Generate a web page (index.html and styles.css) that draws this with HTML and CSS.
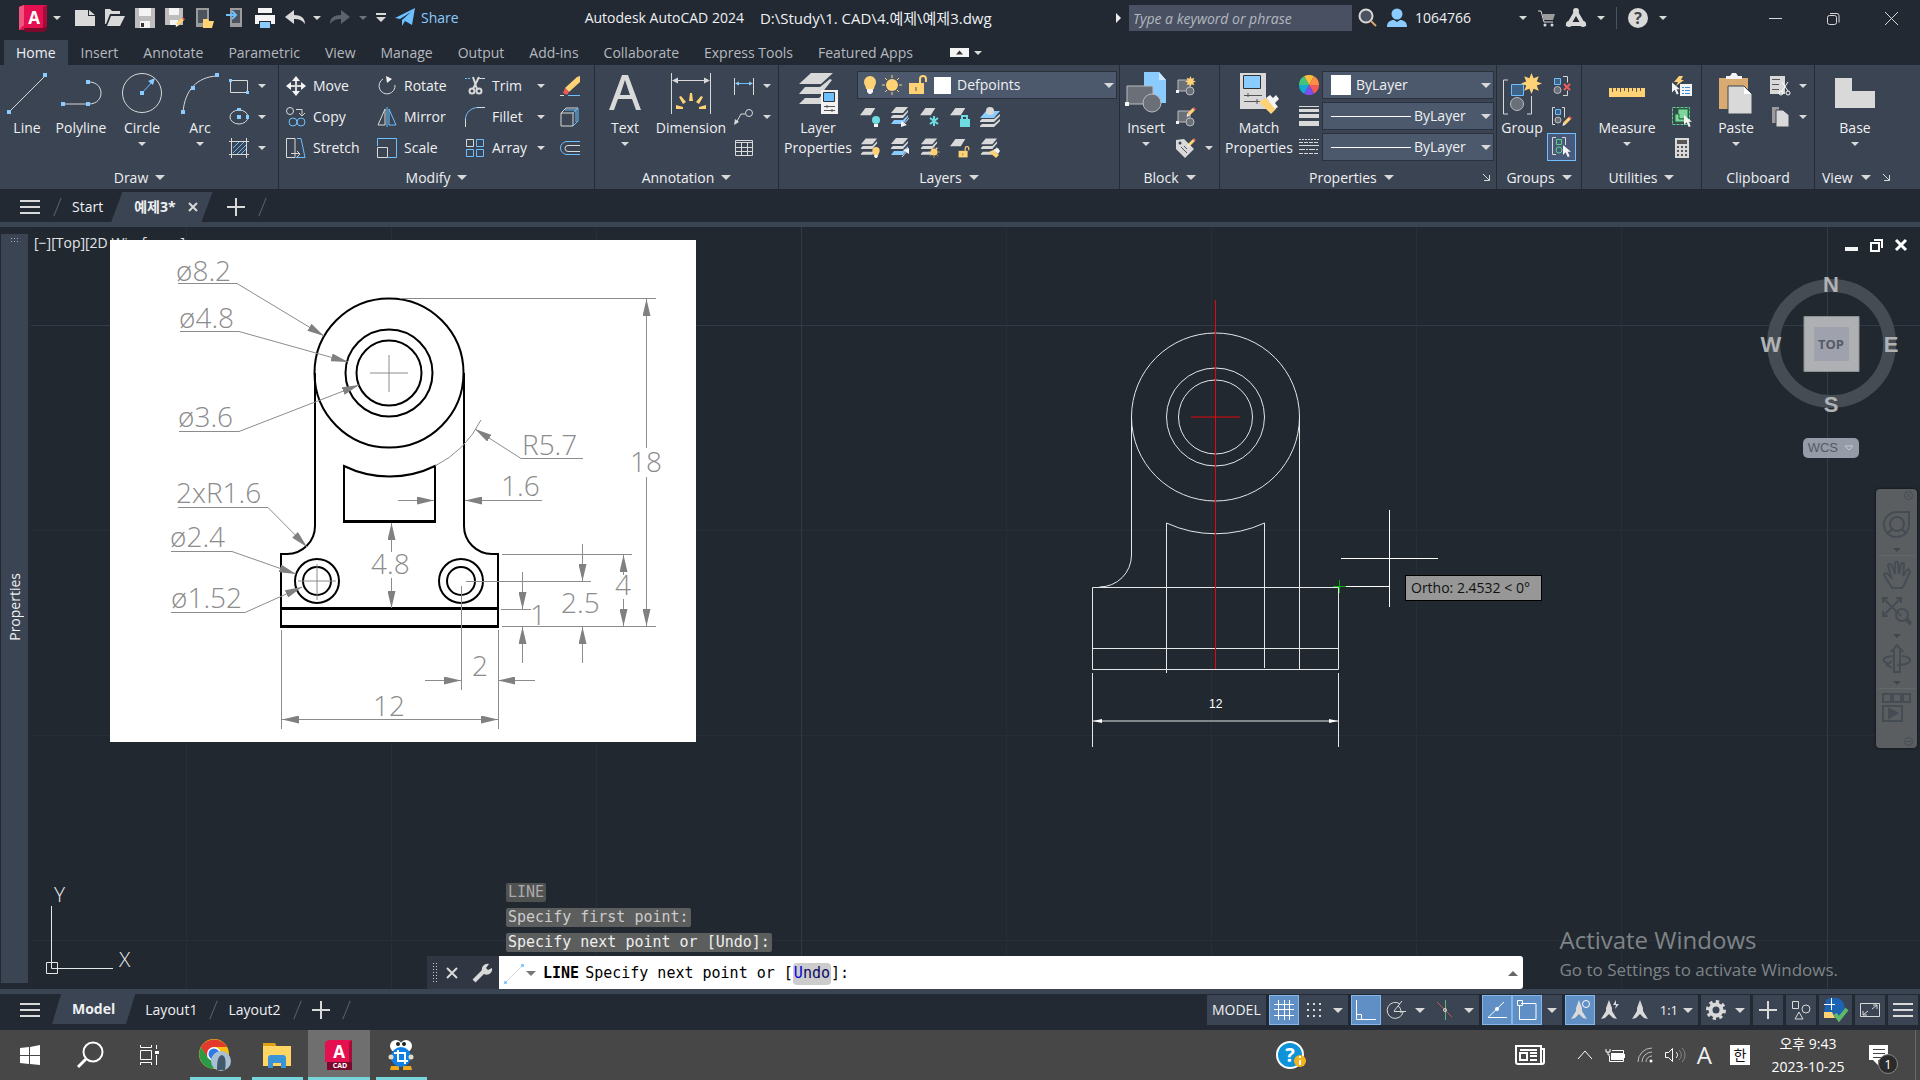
FILE: index.html
```
<!DOCTYPE html>
<html lang="ko">
<head>
    <meta charset="UTF-8">
    <meta name="viewport" content="width=device-width, initial-scale=1.0">
    <title>Autodesk AutoCAD 2024</title>
    <link rel="stylesheet" href="styles.css">
</head>
<body>
    <!-- shared icon parts -->
    <svg class="defs" aria-hidden="true">
        <symbol id="sheet" viewBox="0 0 20 20"><path class="fw" d="M6 0h11l-5 8H0z"/></symbol>
        <symbol id="stack" viewBox="0 0 20 20"><path class="fw" d="M6 0h12l-5 6H1z M1 10l2-2h10l5-5v2l-5 6H1z M1 16l2-2h10l5-5v2l-5 6H1z"/></symbol>
        <symbol id="stackb" viewBox="0 0 20 20"><path class="fw" d="M6 0h12l-5 6H1z M1 10l2-2h10l5-5v2l-5 6H1z"/><path class="fb" d="M1 17l3-4h9l5-5v2l-5 7z"/></symbol>
        <symbol id="bulb" viewBox="0 0 12 18"><path class="fy" d="M6 0a6 6 0 0 1 6 6c0 3-2 4-2 7H2c0-3-2-4-2-7a6 6 0 0 1 6-6z"/><path class="fwh" d="M3 13h6v3l-2 2H5l-2-2z"/></symbol>
        <symbol id="sun" viewBox="0 0 20 20"><circle class="fy" cx="10" cy="10" r="6"/><path class="y" d="M10 0v3M10 17v3M0 10h3M17 10h3M3 3l2 2M15 15l2 2M17 3l-2 2M5 15l-2 2"/></symbol>
        <symbol id="unlock" viewBox="0 0 20 20"><path class="y2" d="M12 8V4a3 3 0 0 1 6 0v3"/><path class="fy" d="M1 8h15v11H1z"/><path class="dk" d="M8 12v4"/></symbol>
        <symbol id="pencil" viewBox="0 0 20 20"><path class="fy" d="M14 2l4 4L8 16l-4-4z"/><path class="fr" d="M14 2l2-2 4 4-2 2z"/><path class="fwh" d="M4 12l4 4-5 2z"/></symbol>
        <symbol id="burst" viewBox="0 0 20 20"><path class="fy" d="M10 0l2 5 5-2-2 5 5 2-5 2 2 5-5-2-2 5-2-5-5 2 2-5-5-2 5-2-2-5 5 2z"/></symbol>
        <symbol id="cursor" viewBox="0 0 12 18"><path class="fwh" d="M0 0v15l4-4 3 7 3-1-3-7h5z"/></symbol>
        <symbol id="blockpart" viewBox="0 0 20 20"><path class="gr" d="M2 4h12v11H2z"/><circle class="gr" cx="14" cy="15" r="4"/><path class="fwh" d="M0 14h3v3H0z"/></symbol>
        <symbol id="compass" viewBox="0 0 20 20"><path class="fw" d="M10 0l3 8v3l5 8-4-1-4-4-4 4-4 1 5-8V8z"/></symbol>
    </svg>

    <header class="titlebar">
        <button class="logo" aria-label="Application menu">
            <svg width="30" height="27" viewBox="0 0 30 27"><path fill="#e51050" d="M0 2l5-2h23v22l-5 3H0z"/><path fill="#7a0a2c" d="M5 23h18l5-3v4l-3 3H6z"/><path fill="#a60d3b" d="M24 2l4-2v21l-4 2z"/><path fill="#f0557f" d="M0 2l5-2v20l-5 5z"/><text class="logo-a" x="15" y="19">A</text></svg>
            <span class="caret"></span>
        </button>
        <nav class="quick">
            <button aria-label="New"><svg width="20" height="20"><path class="fw" d="M0 2h13v6h7v10H0z M14 2l6 5h-6z"/></svg></button>
            <button aria-label="Open"><svg width="20" height="20"><path class="fw" d="M0 1h5l2 2h8v3H5L1 16H0z M6 8h14l-5 10H2z"/></svg></button>
            <button aria-label="Save"><svg width="20" height="20"><path fill="#bdbdbd" d="M0 0h20v20H0z"/><path class="fwh" d="M4 0h12v8H4z M5 13h10v7H5z"/><path fill="#333" d="M6 15h3v4H6z"/></svg></button>
            <button aria-label="Save as"><svg width="20" height="20"><path fill="#bdbdbd" d="M0 0h18v17H0z"/><path class="fwh" d="M4 0h10v7H4z M5 12h8v5H5z"/><use href="#pencil" x="9" y="9" width="11" height="11"/></svg></button>
            <button aria-label="Open from mobile"><svg width="20" height="20"><path fill="#9b9b9b" d="M1 0h13v19H1z"/><path fill="#4d535c" d="M3 2h9v13H3z"/><path class="fy" d="M8 11h5l1 2h5l-2 7H8z"/></svg></button>
            <button aria-label="Save to mobile"><svg width="20" height="20"><path fill="#9b9b9b" d="M5 0h12v19H5z"/><path fill="#4d535c" d="M7 2h8v13H7z"/><path class="b2" d="M1 7h9M7 3l4 4-4 4"/></svg></button>
            <button aria-label="Plot"><svg width="20" height="20"><path class="fwh" d="M3 0h14v5H3z M0 7h20v9h-4v-3H4v3H0z"/><path class="fb" d="M5 14h10v6H5z"/></svg></button>
            <button aria-label="Undo"><svg width="20" height="20"><path class="fw" d="M0 9l9-7v5c7 0 11 3 11 9-3-4-6-5-11-5v5z"/></svg></button>
        </nav>
        <nav class="quick2">
            <span class="caret"></span>
            <button aria-label="Redo"><svg width="20" height="20"><path fill="#5c636e" d="M20 9l-9-7v5C4 7 0 10 0 16c3-4 6-5 11-5v5z"/></svg></button>
            <span class="caret dim"></span>
            <button aria-label="Customize"><svg width="10" height="10"><path class="fw" d="M0 0h10v2H0z M0 4h10l-5 5z"/></svg></button>
            <button class="share"><svg width="20" height="20"><path fill="#6cc0ff" d="M0 10L20 0l-3 17-7-4-3 5v-6l9-8-11 7z"/></svg>Share</button>
        </nav>
        <h1 class="app-title"><span>Autodesk AutoCAD 2024</span><span class="file-name">D:\Study\1. CAD\4.예제\예제3.dwg</span></h1>
        <div class="search">
            <span class="caret-right"></span>
            <input type="text" aria-label="Search" placeholder="Type a keyword or phrase">
            <button aria-label="Find"><svg width="20" height="20"><circle class="w2" cx="8" cy="8" r="6.5" fill="#4b5361"/><path stroke="#d8a46a" stroke-width="2" d="M13 13l5 5"/></svg></button>
        </div>
        <button class="user"><svg width="20" height="20"><circle class="fb" cx="10" cy="6" r="5.5"/><path class="fb" d="M0 19c0-5 3-7 7-7l3 2 3-2c4 0 7 2 7 7z"/></svg>1064766</button>
        <div class="account">
            <span class="caret"></span>
            <button aria-label="Store"><svg width="17" height="18"><path class="w1" d="M0 2h3l3 11h9"/><path fill="#9b9b9b" d="M4 5h13l-2 6H6z"/><circle class="fw" cx="7" cy="16" r="1.5"/><circle class="fw" cx="14" cy="16" r="1.5"/></svg></button>
            <button aria-label="Apps"><svg width="20" height="20"><path class="w3" d="M10 4L3 16h14z"/><circle class="fw" cx="10" cy="3" r="3"/><circle class="fw" cx="3" cy="16" r="3"/><circle class="fw" cx="17" cy="16" r="3"/></svg></button>
            <span class="caret"></span>
            <span class="vline"></span>
            <button class="help" aria-label="Help">?</button>
            <span class="caret"></span>
        </div>
        <div class="window-buttons">
            <button aria-label="Minimize"><svg width="13" height="13"><path class="w1" d="M0 6.500h13"/></svg></button>
            <button aria-label="Restore"><svg width="13" height="13"><rect class="w1" x=".5" y="3.500" width="9" height="9" rx="2"/><path class="w1" d="M3 1.500h7q2 0 2 2v7"/></svg></button>
            <button aria-label="Close"><svg width="13" height="13"><path class="w1" d="M0 0l13 13M13 0L0 13"/></svg></button>
        </div>
    </header>

    <nav class="tabs">
        <button class="on">Home</button>
        <button>Insert</button>
        <button>Annotate</button>
        <button>Parametric</button>
        <button>View</button>
        <button>Manage</button>
        <button>Output</button>
        <button>Add-ins</button>
        <button>Collaborate</button>
        <button>Express Tools</button>
        <button>Featured Apps</button>
        <button class="collapse" aria-label="Collapse ribbon"><svg width="19" height="9"><path class="fwh" d="M0 0h19v9H0z"/><path fill="#333" d="M6 6.500h7l-3.500-4z"/></svg><span class="caret"></span></button>
    </nav>

    <section class="ribbon">
        <div class="panel p-draw">
            <div class="tools">
                <button class="big w52"><svg width="40" height="44"><path class="w1" d="M2 40L38 4"/><path class="fb" d="M0 38h4v4H0z M36 1h4v4h-4z"/></svg>Line</button>
                <button class="big w56"><svg width="40" height="44"><path class="w1" d="M2 32h26c16 0 16-22 0-22"/><path class="fb" d="M0 30h4v4H0z M25 30h4v4h-4z M25 8h4v4h-4z"/></svg>Polyline</button>
                <button class="big w66"><svg width="42" height="44"><circle class="w1" cx="21" cy="21" r="19.500"/><path class="b1" d="M21 21L32 9"/><path class="fb" d="M19 19h4v4h-4z M34 6l-2 7-5-4z"/></svg>Circle<span class="caret"></span></button>
                <button class="big w50"><svg width="38" height="44"><path class="w1" d="M2 40C4 18 16 5 36 4"/><path class="fb" d="M0 38h4v4H0z M34 1h4v4h-4z M10 14h4v4h-4z"/></svg>Arc<span class="caret"></span></button>
                <div class="rows">
                    <button class="small" aria-label="Rectangle"><svg width="20" height="20"><path class="w1" d="M1.500 4.500h17v12h-17z"/><path class="fb" d="M0 3h3v3H0z M17 15h3v3h-3z"/></svg><span class="caret"></span></button>
                    <button class="small" aria-label="Ellipse"><svg width="20" height="20"><ellipse class="w1" cx="10" cy="10" rx="9" ry="7"/><path class="fb" d="M8 8h4v4H8z M8 1h4v3H8z M17 8h3v4h-3z"/></svg><span class="caret"></span></button>
                    <button class="small" aria-label="Hatch"><svg width="20" height="20"><path class="w1" d="M0 3.500h20M0 16.500h20M2.500 0v20M17.500 0v20"/><path class="b1" d="M4 10l6-6M4 15L15 4M8 16l9-9M12 16l5-5"/></svg><span class="caret"></span></button>
                </div>
            </div>
            <button class="panel-title">Draw<span class="caret wide"></span></button>
        </div>

        <div class="panel p-modify">
            <div class="tools modify-grid">
                <button class="small"><svg width="20" height="20"><path class="w2" d="M10 2v16M2 10h16"/><path class="fwh" d="M10 0l4 5H6z M10 20l4-5H6z M0 10l5-4v8z M20 10l-5-4v8z"/></svg>Move</button>
                <button class="small"><svg width="20" height="20"><path class="w1" d="M6 3a8 8 0 1 0 12 6"/><path class="fwh" d="M9 0l6 3-5 4z"/></svg>Rotate</button>
                <button class="small sp"><svg width="20" height="20"><path class="w2" d="M8 1l4 12M14 1L8 13"/><circle class="w2" cx="7" cy="15" r="2.500"/><circle class="w2" cx="14" cy="15" r="2.500"/><path class="b1" d="M0 2.500h6" stroke-dasharray="2 1"/><path class="w1" d="M14 2.500h6"/></svg>Trim<span class="caret"></span></button>
                <button class="small" aria-label="Erase"><svg width="20" height="20"><path class="fy" d="M20 0v6L9 16l-4-4L17 1z"/><path class="fr" d="M5 12l4 4-2 3-4-2z"/><path class="w1" d="M0 19.500h4"/><path class="b1" d="M8 19.500h12"/></svg></button>
                <button class="small"><svg width="20" height="20"><circle class="w1" cx="4" cy="4" r="3.500"/><path class="w1" d="M10 2.500h6v5M13 6l3 3 3-3"/><circle class="b1" cx="7" cy="15" r="4"/><circle class="b1" cx="15" cy="15" r="4"/></svg>Copy</button>
                <button class="small"><svg width="20" height="20"><path class="w1" d="M8 2v16H1z"/><path class="b1" d="M12 2v16h7z M10 0v20"/></svg>Mirror</button>
                <button class="small sp"><svg width="20" height="20"><path class="b1" d="M.5 12C.5 6 6 .5 13 .5"/><path class="w1" d="M12 .5h8M.5 12v8"/></svg>Fillet<span class="caret"></span></button>
                <button class="small" aria-label="Explode"><svg width="20" height="20"><path class="w1" d="M1 6h12v13H1z M1 6l5-5h12M13 6l3-3"/><path class="b1" d="M13 6l5-5v13l-5 5M5 3h11v12"/></svg></button>
                <button class="small"><svg width="20" height="20"><path class="w1" d="M9 .5H.5v19H9z M5 15.500h8M11 13l3 3-3 3"/><path class="b1" d="M11 .5h4l4 19h-9"/></svg>Stretch</button>
                <button class="small"><svg width="20" height="20"><path class="b1" d="M.5 8V.5h19v19H11"/><path class="w1" d="M.5 9.500h10v10H.5z"/></svg>Scale</button>
                <button class="small sp"><svg width="20" height="20"><path class="w1" d="M1.500 1.500h7v7h-7z"/><path class="b1" d="M11.500 1.500h7v7h-7z M1.500 11.500h7v7h-7z M11.500 11.500h7v7h-7z"/></svg>Array<span class="caret"></span></button>
                <button class="small" aria-label="Offset"><svg width="20" height="20"><path class="b1" d="M20 3.500H7a6.500 6.500 0 0 0 0 13h13"/><path class="w1" d="M20 7.500H8a3 3 0 0 0 0 6h12"/></svg></button>
            </div>
            <button class="panel-title">Modify<span class="caret wide"></span></button>
        </div>

        <div class="panel p-annotation">
            <div class="tools">
                <button class="big w60"><svg width="32" height="44"><path class="fw" d="M0 38L13 3h6l13 35h-5l-4-11H9L5 38z M11 23h10L16 8z"/></svg>Text<span class="caret"></span></button>
                <button class="big w72"><svg width="40" height="44"><path class="w1" d="M.5 1v41M39.500 1v41M3 8.500h34"/><path class="fw" d="M1 8.500l6-3v6z M39 8.500l-6-3v6z"/><path class="fy" d="M18 29l1-8h2l1 8z M15 30l-5-6-2 1 4 7z M25 30l5-6 2 1-4 7z M12 35l-7-2v4h7z M28 35l7-2v4h-7z"/></svg>Dimension</button>
                <div class="rows">
                    <button class="small" aria-label="Linear"><svg width="20" height="20"><path class="w1" d="M.5 2v17M19.500 2v17"/><path class="b1" d="M2 7.500h16"/><path class="fb" d="M1 7.500l4-2v4z M19 7.500l-4-2v4z"/></svg><span class="caret"></span></button>
                    <button class="small" aria-label="Leader"><svg width="20" height="20"><circle class="w1" cx="15" cy="6" r="3.500"/><path class="w1" d="M11 7H7L2 16"/><path class="fw" d="M0 18l1-6 4 3z"/></svg><span class="caret"></span></button>
                    <button class="small" aria-label="Table"><svg width="20" height="20"><path class="w1" d="M1.500 2.500h17v15h-17z M1.500 4.500h17M1.500 9.500h17M1.500 13.500h17M7.500 5v12M13.500 5v12"/></svg></button>
                </div>
            </div>
            <button class="panel-title">Annotation<span class="caret wide"></span></button>
        </div>

        <div class="panel p-layers">
            <div class="tools">
                <button class="big w78"><svg width="40" height="44"><path class="fw" d="M13 1h22L23 12H1z M7 15h15l10-8 2 1-11 14H1z M7 26h14l3-3v9H1z"/><path fill="#f2f2f2" d="M23 18h17v24H23z"/><path fill="#6cc0ff" stroke="#333" d="M25.500 20.500h11v9h-11z"/><path stroke="#555" d="M26 34.500h11M26 38.500h11M29 33v3M34 37v3"/></svg>Layer<br>Properties</button>
                <div class="layer-col">
                    <label class="combo layer-combo"><svg width="12" height="20"><use href="#bulb" width="12" height="20"/></svg><svg width="20" height="20"><use href="#sun" width="20" height="20"/></svg><svg width="20" height="20"><use href="#unlock" width="20" height="20"/></svg><span class="swatch"></span><select aria-label="Layer"><option>Defpoints</option></select><span class="caret wide"></span></label>
                    <div class="layer-grid">
                        <button aria-label="Off"><svg width="20" height="20"><use href="#sheet" width="18" height="20"/><circle cx="16" cy="13" r="4" fill="#6fdce2"/><path class="fwh" d="M14 17h4v3h-4z"/></svg></button>
                        <button aria-label="Isolate"><svg width="20" height="20"><use href="#stackb" width="20" height="20"/><path class="w1" d="M19 11l-6 7"/><path class="fwh" d="M11 20v-6l6 4z"/></svg></button>
                        <button aria-label="Freeze"><svg width="20" height="20"><use href="#sheet" width="18" height="20"/><path stroke="#6fdce2" stroke-width="2" d="M14 9v10M10 11l8 6M10 17l8-6"/></svg></button>
                        <button aria-label="Lock"><svg width="20" height="20"><use href="#sheet" width="18" height="20"/><path fill="#6fdce2" d="M10 12h10v8H10z"/><path stroke="#6fdce2" stroke-width="2" d="M12 12V9h5v3"/></svg></button>
                        <button aria-label="Make current"><svg width="20" height="20"><path class="fw" d="M0 14l2-2h12l6-5v2l-6 6H0z M0 19l2-2h12l6-5v2l-6 6H0z"/><path class="fb" d="M6 4h14l-6 7H0z"/><circle class="fw" cx="10" cy="4" r="4"/></svg></button>
                        <button aria-label="Turn all on"><svg width="20" height="20"><use href="#stack" width="19" height="20"/><use href="#bulb" x="12" y="9" width="8" height="11"/></svg></button>
                        <button aria-label="Unisolate"><svg width="20" height="20"><use href="#stackb" width="20" height="20"/><path class="w1" d="M12 19l6-7"/><path class="fwh" d="M19 10v6l-6-4z"/></svg></button>
                        <button aria-label="Thaw all"><svg width="20" height="20"><use href="#stack" width="19" height="20"/><use href="#sun" x="8" y="8" width="12" height="12"/></svg></button>
                        <button aria-label="Unlock"><svg width="20" height="20"><use href="#sheet" width="18" height="20"/><use href="#unlock" x="8" y="8" width="12" height="12"/></svg></button>
                        <button aria-label="Match layer"><svg width="20" height="20"><use href="#stack" width="19" height="20"/><path class="fy" d="M9 14l4-2 6 5-3 3z"/><path class="fwh" d="M13 12l5-2 2 3-2 3z"/></svg></button>
                    </div>
                </div>
            </div>
            <button class="panel-title">Layers<span class="caret wide"></span></button>
        </div>

        <div class="panel p-block">
            <div class="tools">
                <button class="big w52"><svg width="42" height="44"><path class="fb" d="M19 0h15l7 8v23H19z"/><path fill="#cfe8ff" d="M34 0l7 8h-7z"/><path class="gr" d="M2 14h26v18H2z"/><circle class="gr" cx="27" cy="31" r="9"/><path class="fwh" d="M0 30h4v4H0z"/></svg>Insert<span class="caret"></span></button>
                <div class="rows">
                    <button class="small" aria-label="Create block"><svg width="20" height="20"><use href="#blockpart" width="20" height="20"/><use href="#burst" x="9" width="11" height="11"/></svg></button>
                    <button class="small" aria-label="Edit block"><svg width="20" height="20"><use href="#blockpart" width="20" height="20"/><use href="#pencil" x="9" width="11" height="11"/></svg></button>
                    <button class="small" aria-label="Edit attributes"><svg width="20" height="20"><path class="fw" d="M0 2l8-1 10 10-9 9L0 11z"/><circle cx="4" cy="5" r="1.500" fill="#3b4453"/><path class="dk" d="M5 9l6 6M8 8l3 3"/><use href="#pencil" x="10" width="10" height="10"/></svg><span class="caret"></span></button>
                </div>
            </div>
            <button class="panel-title">Block<span class="caret wide"></span></button>
        </div>

        <div class="panel p-properties">
            <div class="tools">
                <button class="big w78"><svg width="40" height="44"><path class="fw" d="M1 1h26v36H1z"/><path fill="#8accff" stroke="#333" d="M4.500 3.500h17v13h-17z"/><path stroke="#555" d="M5 23.500h18M5 29.500h16M9 21v4M18 27v5"/><path class="fy" d="M20 30l7-4 10 11-5 5z"/><path class="fwh" d="M27 26l4-3 3 3 3-3 3 4-4 4 3 4-3 2z"/></svg>Match<br>Properties</button>
                <div class="rows prop-icons">
                    <svg width="20" height="20" viewBox="-10 -10 20 20"><path fill="#fbbd3b" d="M0 0L-5-8.700A10 10 0 0 1 5-8.700z"/><path fill="#fc8f45" d="M0 0L5-8.700A10 10 0 0 1 10 0z"/><path fill="#ee5a5a" d="M0 0H10A10 10 0 0 1 5 8.700z"/><path fill="#7d4df0" d="M0 0L5 8.700A10 10 0 0 1-5 8.700z"/><path fill="#16a9d2" d="M0 0L-5 8.700A10 10 0 0 1-10 0z"/><path fill="#3fc57c" d="M0 0H-10A10 10 0 0 1-5-8.700z"/></svg>
                    <svg width="20" height="20"><path class="fw" d="M0 0h20v1H0z M0 3h20v3H0z M0 8h20v4H0z M0 15h20v5H0z"/></svg>
                    <svg width="20" height="20"><path class="w1" d="M0 8.500h20"/><path class="w1" stroke-dasharray="2 1" d="M0 2.500h20"/><path class="w1" stroke-dasharray="4 1" d="M0 5.500h20M0 16.500h20"/><path class="w1" stroke-dasharray="6 1 2 1" d="M0 12.500h20"/></svg>
                </div>
                <div class="rows prop-combos">
                    <label class="combo color-combo"><span class="swatch wide-swatch"></span><select aria-label="Color"><option>ByLayer</option></select><span class="caret wide"></span></label>
                    <label class="combo"><span class="rule"></span><select aria-label="Lineweight"><option>ByLayer</option></select><span class="caret wide"></span></label>
                    <label class="combo"><span class="rule"></span><select aria-label="Linetype"><option>ByLayer</option></select><span class="caret wide"></span></label>
                </div>
            </div>
            <button class="panel-title">Properties<span class="caret wide"></span><svg class="launch" width="7" height="7"><path class="w1" d="M0 0l6 6M6.500 1v5.500H1"/></svg></button>
        </div>

        <div class="panel p-groups">
            <div class="tools">
                <button class="big w50"><svg width="40" height="44"><path class="w1" d="M6 8H1.500v34H6M25 42h4.500V24"/><path fill="#3f6288" stroke="#6cc0ff" d="M9.500 12.500h12v11h-12z"/><circle class="gr" cx="15" cy="32" r="6.500"/><use href="#burst" x="19" y="1" width="21" height="21"/></svg>Group</button>
                <div class="rows">
                    <button class="small" aria-label="Ungroup"><svg width="20" height="20"><path fill="#3f6288" stroke="#6cc0ff" d="M2.500 2.500h6v6h-6z"/><circle class="gr" cx="5.500" cy="14" r="3.500"/><path class="w1" d="M11 .5h4.500v6M11 19.500h4.500v-5"/><path stroke="#ee5a5a" stroke-width="2" d="M12 8l6 6M18 8l-6 6"/></svg></button>
                    <button class="small" aria-label="Group edit"><svg width="20" height="20"><path fill="#3f6288" stroke="#6cc0ff" d="M3.500 2.500h5v5h-5z"/><circle class="gr" cx="6" cy="13" r="3"/><path class="w1" d="M3 .5H.5v17H3M10 .5h2.500v10"/><use href="#pencil" x="9" y="9" width="11" height="11"/></svg></button>
                    <button class="small picked" aria-label="Group selection"><svg width="20" height="20"><path stroke="#5fd08a" d="M4.500 2.500h5v5h-5z"/><circle stroke="#5fd08a" cx="7" cy="13" r="3"/><path class="w1" d="M4 .5H.5v17H4M10 .5h3.500V8"/><use href="#cursor" x="11" y="8" width="8" height="12"/></svg></button>
                </div>
            </div>
            <button class="panel-title">Groups<span class="caret wide"></span></button>
        </div>

        <div class="panel p-utilities">
            <div class="tools">
                <button class="big w90"><svg width="36" height="44"><path class="fy" d="M0 16h36v9H0z"/><path class="dk" d="M3.500 16v4M7.500 16v3M11.500 16v4M15.500 16v3M19.500 16v4M23.500 16v3M27.500 16v4M31.500 16v3"/></svg>Measure<span class="caret"></span></button>
                <div class="rows">
                    <button class="small" aria-label="Quick select"><svg width="20" height="20"><path class="fy" d="M7 0L2 6h4l-2 4 8-6H9l2-4z"/><use href="#cursor" y="6" width="8" height="13"/><path class="fwh" d="M8 8h12v12H8z"/><path stroke="#3a8dde" d="M10 11.500h2M13 11.500h5M10 14.500h2M13 14.500h5M10 17.500h2M13 17.500h5"/></svg></button>
                    <button class="small" aria-label="Select similar"><svg width="20" height="20"><path stroke="#5fd08a" stroke-dasharray="3 1" d="M.5 .5h17v17H.5z"/><path fill="#7ed69c" stroke="#256b41" d="M6 2h10v10H6z"/><path fill="#7ed69c" stroke="#256b41" d="M3 7h4v5h6v3H3z"/><use href="#cursor" x="12" y="8" width="8" height="12"/></svg></button>
                    <button class="small" aria-label="Calculator"><svg width="20" height="20"><path class="fw" d="M3 0h14v20H3z"/><path fill="#555" d="M5 2h10v4H5z M5 8h2v2H5z M9 8h2v2H9z M13 8h2v2h-2z M5 12h2v2H5z M9 12h2v2H9z M13 12h2v2h-2z M5 16h2v2H5z M9 16h2v2H9z M13 16h2v2h-2z"/></svg></button>
                </div>
            </div>
            <button class="panel-title">Utilities<span class="caret wide"></span></button>
        </div>

        <div class="panel p-clipboard">
            <div class="tools">
                <button class="big w68"><svg width="34" height="44"><path fill="#d9ab72" d="M0 6h29v31H0z"/><path class="fwh" d="M7 7V4h4l2-3h4l2 3h4v3z"/><path class="fw" stroke="#3b4453" d="M9 14h16l8 8v20H9z"/><path fill="#fff" d="M25 15l7 7h-7z"/></svg>Paste<span class="caret"></span></button>
                <div class="rows">
                    <button class="small" aria-label="Cut"><svg width="20" height="20"><path class="fw" d="M0 0h15v18H0z"/><path class="dk" d="M2 3.500h8M2 8.500h7M2 13.500h7"/><path class="wd" d="M12 6l6 9M18 6l-6 9"/><circle class="wd" cx="11" cy="17" r="2"/><circle class="wd" cx="18" cy="17" r="2"/></svg><span class="caret"></span></button>
                    <button class="small" aria-label="Copy clip"><svg width="20" height="20"><path fill="#9b9b9b" d="M2 0h7v16H2z"/><path class="fw" stroke="#3b4453" d="M6 3h7l6 5v12H6z"/></svg><span class="caret"></span></button>
                </div>
            </div>
            <button class="panel-title">Clipboard</button>
        </div>

        <div class="panel p-view">
            <div class="tools">
                <button class="big w80"><svg width="40" height="44"><path class="fw" d="M0 6h17v13h23v17H0z"/></svg>Base<span class="caret"></span></button>
            </div>
            <button class="panel-title">View<span class="caret wide"></span><svg width="7" height="7"><path class="w1" d="M0 0l6 6M6.500 1v5.500H1"/></svg></button>
        </div>
    </section>

    <nav class="doc-tabs">
        <button class="burger" aria-label="Menu"><span></span><span></span><span></span></button>
        <i class="slash"></i>
        <button>Start</button>
        <button class="doc-on"><b>예제3*</b><svg width="10" height="10"><path class="w2" d="M1 1l8 8M9 1L1 9"/></svg></button>
        <button class="plus" aria-label="New drawing"><svg width="18" height="18"><path class="w2" d="M9 0v18M0 9h18"/></svg></button>
        <i class="slash"></i>
    </nav>

    <main class="work">
        <aside class="palette"><span class="grip"></span><span class="palette-name">Properties</span></aside>
        <section class="canvas">
            <svg class="drawing">
                <defs>
                    <marker id="arrow" markerUnits="userSpaceOnUse" markerWidth="18" markerHeight="8" refX="17" refY="4" orient="auto-start-reverse"><path d="M0 0l17 4-17 4z" fill="#808080"/></marker>
                    <marker id="tip" markerUnits="userSpaceOnUse" markerWidth="9" markerHeight="4" refX="9" refY="2" orient="auto-start-reverse"><path d="M0 0l9 2-9 2z" fill="#fff"/></marker>
                </defs>
                <!-- coordinates are window pixels -->
                <g transform="translate(-31 -227)">
                    <path class="grid" d="M186.500 227V989M391.500 227V989M596.500 227V989M1006.500 227V989M1211.500 227V989M1416.500 227V989M1621.500 227V989M31 530.500H1920M31 735.500H1920M31 940.500H1920"/>
                    <path class="grid major" d="M801.500 227V989M1827.500 227V989M31 325.500H1920"/>

                    <text class="view-label" x="34" y="248">[−][Top][2D Wireframe]</text>

                    <rect x="110" y="240" width="586" height="502" fill="#fff"/>
                    <g class="part">
                        <circle cx="389" cy="373" r="74.500"/>
                        <circle cx="389" cy="373" r="43.500"/>
                        <circle cx="389" cy="373" r="32.500"/>
                        <path d="M315 373V526A28 28 0 0 1 287 554H281V627H498V554H492A28 28 0 0 1 464 526V373"/>
                        <path d="M344 466V522H435V466A103.500 103.500 0 0 1 344 466z"/>
                        <path class="heavy" d="M280 608.500H499M343 521.500H436M280 626.500H499"/>
                        <circle cx="317" cy="581" r="22"/><circle cx="317" cy="581" r="14"/>
                        <circle cx="461" cy="581" r="22"/><circle cx="461" cy="581" r="14"/>
                    </g>
                    <g class="dims">
                        <path d="M370 373H408M389 355V392M298 581H336M317 564V600M435 466A103.500 103.500 0 0 0 481 420"/>
                        <path d="M400 298.500H656M502 626.500H656M502 554.500H632M501 609.500H531M466 581.500H591M461.500 586V690M281.500 630V729M498.500 630V729"/>
                        <g marker-end="url(#arrow)">
                            <path d="M178 283.500H237L324 336"/>
                            <path d="M180 331.500H239L348 362"/>
                            <path d="M179 431.500H239L359 385"/>
                            <path d="M178 507.500H268L307 547"/>
                            <path d="M171 551.500H232L296 574"/>
                            <path d="M171 612.500H245L302 587"/>
                            <path d="M583 458.500H521L475 429"/>
                            <path d="M646.500 448V299"/><path d="M646.500 477V626"/>
                            <path d="M398 500.500H434"/><path d="M542 500.500H465"/>
                            <path d="M391.500 552V523"/><path d="M391.500 578V608"/>
                            <path d="M623.500 575V555"/><path d="M623.500 599V626"/>
                            <path d="M582.500 544V581"/><path d="M582.500 663V627"/>
                            <path d="M522.500 572V609"/><path d="M522.500 663V627"/>
                            <path d="M425 680.500H461"/><path d="M535 680.500H498"/>
                            <path marker-start="url(#arrow)" d="M282 719.500H498"/>
                        </g>
                        <text x="176" y="281">ø8.2</text>
                        <text x="179" y="328">ø4.8</text>
                        <text x="178" y="427">ø3.6</text>
                        <text x="176" y="503">2xR1.6</text>
                        <text x="170" y="547">ø2.4</text>
                        <text x="171" y="608">ø1.52</text>
                        <text x="522" y="455">R5.7</text>
                        <text x="630" y="472">18</text>
                        <text x="501" y="496">1.6</text>
                        <text x="371" y="574">4.8</text>
                        <text x="615" y="595">4</text>
                        <text x="561" y="613">2.5</text>
                        <text x="530" y="625">1</text>
                        <text x="472" y="676">2</text>
                        <text x="373" y="716">12</text>
                    </g>

                    <g class="model">
                        <circle cx="1215.500" cy="417" r="84"/>
                        <circle cx="1215.500" cy="417" r="49"/>
                        <circle cx="1215.500" cy="417" r="37"/>
                        <path d="M1131.500 417V555A32 32 0 0 1 1099.500 587M1299.500 417V669M1166.500 673V523A117 117 0 0 0 1264.500 523V668"/>
                        <path d="M1092.500 587.500H1338.500V669.500H1092.500zM1092.500 648.500H1338.500"/>
                        <path d="M1092.500 673V747M1338.500 673V747"/>
                        <path marker-start="url(#tip)" marker-end="url(#tip)" d="M1093 721H1338"/>
                        <text x="1209" y="708">12</text>
                        <path class="red" d="M1215.500 300V669M1191 417H1240"/>
                        <path class="cross" d="M1389.500 510V607M1341 558.500H1438M1346 586.500H1389"/>
                        <path class="green" d="M1333 586.500H1346M1339.500 580V593"/>
                    </g>

                    <g class="ucs">
                        <path d="M51.500 906V968.500H113M46.500 962.500H57.500V973.500H46.500z"/>
                        <text x="54" y="902">Y</text>
                        <text x="119" y="967">X</text>
                    </g>

                    <g class="viewcube">
                        <circle cx="1831.500" cy="343.500" r="58"/>
                        <text x="1831" y="292">N</text>
                        <text x="1831" y="412">S</text>
                        <text x="1771" y="352">W</text>
                        <text x="1891" y="352">E</text>
                        <path class="cube" d="M1804 316.500H1859V371.500H1804z"/>
                        <path class="face" d="M1814 327H1849V361H1814z"/>
                        <text class="top" x="1831" y="349">TOP</text>
                    </g>
                </g>
            </svg>

            <output class="tooltip">Ortho: 2.4532 &lt; 0°</output>

            <div class="doc-buttons">
                <button aria-label="Minimize drawing"><svg width="13" height="13"><path class="fwh" d="M0 8h13v4H0z"/></svg></button>
                <button aria-label="Restore drawing"><svg width="13" height="13"><path stroke="#fff" stroke-width="2" d="M1 4h8v8H1z M4 1h8v8"/></svg></button>
                <button aria-label="Close drawing"><svg width="13" height="13"><path stroke="#fff" stroke-width="3" d="M1 1l10 10M11 1L1 11"/></svg></button>
            </div>
            <button class="wcs">WCS<svg width="10" height="6"><path stroke="#c5c8ce" d="M1 1h8L5 5z"/></svg></button>

            <div class="navbar">
                <button class="corner" aria-label="Close bar"><svg width="9" height="9"><circle cx="4.500" cy="4.500" r="4"/><path d="M3 3l3 3M6 3L3 6"/></svg></button>
                <button class="tall wheel" aria-label="Wheel"><svg width="28" height="28"><path d="M14 1h12v13a12.500 12.500 0 1 1-12-13z"/><circle cx="14" cy="13" r="7"/><path d="M9 18l-5 5M19 18l5 5"/></svg><span class="caret"></span></button>
                <hr>
                <button aria-label="Pan"><svg width="28" height="30"><path d="M9 28C6 22 1 17 1 14c2-2 4 0 7 3L5 5c2-2 3-1 4 1l3 8V3c1-2 3-2 3 0l1 11 2-10c2-2 3-1 3 1l-1 11 4-6c2-1 3 0 3 2l-6 13-2 3z"/></svg></button>
                <button class="tall" aria-label="Zoom"><svg width="30" height="28"><path d="M1 1l18 18M19 1L1 19M1 6V1h5M14 1h5v5M1 14v5h5"/><circle cx="20" cy="18" r="6"/><path class="thick" d="M24 22l5 5"/></svg><span class="caret"></span></button>
                <button class="tall" aria-label="Orbit"><svg width="28" height="28"><path d="M11 28V7H9l5-6 5 6h-2v21z"/><path d="M19 12c12 1 11 9-5 9M10 12C-2 13-2 18 6 20M9 17l-5 4 5 3"/></svg><span class="caret"></span></button>
                <hr>
                <button aria-label="ShowMotion"><svg width="29" height="30"><path d="M1 1h8v8H1z M11 1h8v8h-8z M21 1h7v8h-7z M1 13h19v15H1z"/><path class="solid" d="M7 16l8 4-8 5z"/></svg></button>
                <button class="corner last" aria-label="Bar options"><svg width="9" height="9"><circle cx="4.500" cy="4.500" r="4"/><path d="M2 4.500h5"/></svg></button>
            </div>

            <div class="activate"><strong>Activate Windows</strong><span>Go to Settings to activate Windows.</span></div>

            <div class="command">
                <ul class="history"><li>LINE</li><li>Specify first point:</li><li>Specify next point or [Undo]:</li></ul>
                <div class="command-line">
                    <div class="command-tools">
                        <span class="dots"></span>
                        <button aria-label="Close command line"><svg width="12" height="12"><path class="w2" d="M1 1l10 10M11 1L1 11"/></svg></button>
                        <button aria-label="Customize command line"><svg width="20" height="20"><path class="w3" d="M2 18l10-10"/><path class="fw" d="M10 9c-1-5 2-9 7-8l-3 4 2 2 4-2c1 5-4 8-8 6z"/></svg></button>
                    </div>
                    <div class="command-box">
                        <svg width="20" height="20"><path stroke="#d4d8dc" d="M2 18L18 2"/><path class="fb" d="M0 17h3v3H0z M17 0h3v3h-3z"/></svg>
                        <span class="caret gray"></span>
                        <label for="cmd"><b>LINE</b>Specify next point or [</label><button class="undo"><span>U</span>ndo</button><span>]:</span>
                        <input id="cmd" type="text">
                        <span class="caret-up"></span>
                    </div>
                </div>
            </div>
        </section>
    </main>

    <footer class="layouts">
        <button class="burger" aria-label="Layout menu"><span></span><span></span><span></span></button>
        <button class="doc-on model-tab"><b>Model</b></button>
        <button>Layout1</button><i class="slash"></i>
        <button>Layout2</button><i class="slash"></i>
        <button class="plus" aria-label="New layout"><svg width="18" height="18"><path class="w2" d="M9 0v18M0 9h18"/></svg></button>
        <i class="slash"></i>
        <div class="status">
            <div><button class="st-model">MODEL</button></div>
            <div><button class="lit" aria-label="Grid"><svg width="20" height="20"><path stroke="#fff" d="M4.500 0v20M10.500 0v20M15.500 0v20M0 4.500h20M0 9.500h20M0 15.500h20"/></svg></button><button class="with-caret" aria-label="Snap"><svg width="20" height="20"><path class="w2" stroke-dasharray="2 4" d="M3 4h14M3 10h14M3 16h14"/></svg><span class="caret wide"></span></button></div>
            <div><button class="lit" aria-label="Ortho"><svg width="20" height="20"><path stroke="#fff" d="M.5 0v19.500H20M.5 14.500h5v5"/></svg></button><button class="with-caret" aria-label="Polar"><svg width="20" height="20"><path class="w1" d="M14 4a8 8 0 1 0 3 8M8 11.500h12M8 11l8-10M12 6c2 1 3 3 3 7"/></svg><span class="caret wide"></span></button><button class="with-caret" aria-label="Isodraft"><svg width="20" height="20"><path stroke="#c05560" d="M2 2l15 15"/><path stroke="#5fb878" d="M10.500 0v20"/><circle class="w1" cx="10" cy="10" r="1.500"/></svg><span class="caret wide"></span></button></div>
            <div><button class="lit" aria-label="Tracking"><svg width="20" height="20"><path stroke="#fff" d="M20 17.500H1L17 2"/><circle cx="10" cy="9" r="2" fill="#fff"/></svg></button><button class="lit" aria-label="Osnap"><svg width="20" height="20"><path stroke="#fff" d="M4 3.500h15v16H2.500V6M.5 .5h5v5h-5z"/></svg></button><button class="only-caret" aria-label="Osnap list"><span class="caret wide"></span></button></div>
            <div><button class="lit" aria-label="Annotation visibility"><svg width="20" height="20"><use href="#compass" x="-1" width="20" height="20"/><circle cx="16" cy="4" r="3.500" stroke="#fff"/></svg></button><button aria-label="Auto scale"><svg width="20" height="20"><use href="#compass" x="-1" width="20" height="20"/><path class="fw" d="M16 0l-3 5h3l-1 4 4-5h-3z"/></svg></button><button aria-label="Annotation"><svg width="20" height="20"><use href="#compass" width="20" height="20"/></svg></button><button class="scale">1:1<span class="caret wide"></span></button></div>
            <div><button class="with-caret" aria-label="Workspace"><svg width="20" height="20"><circle cx="10" cy="10" r="5.500" stroke="#d9d9d9" stroke-width="4"/><circle cx="10" cy="10" r="8.500" stroke="#d9d9d9" stroke-width="3" stroke-dasharray="3.300 3.300"/></svg><span class="caret wide"></span></button></div>
            <div><button aria-label="Monitor"><svg width="20" height="20"><path class="w2" d="M10 1v18M1 10h18"/></svg></button></div>
            <div><button aria-label="Isolate objects"><svg width="20" height="20"><path class="w1" d="M1.500 1.500h6v7h-6z M8 12l4 7H4z"/><circle class="w1" cx="15" cy="9" r="4"/></svg></button></div>
            <div><button class="st-graphics" aria-label="Graphics"><svg width="24" height="24"><path fill="#1d63b3" d="M2 2c4-3 12-3 15 0 4 4 5 10 3 15l-9 2-11-5z"/><path stroke="#fff" d="M7.500 0v12M0 6.500h11"/><path class="fy" d="M0 14h8l3 6H0z"/><path stroke="#5fb96a" stroke-width="4" d="M11 16l4 5 8-10"/></svg></button></div>
            <div><button aria-label="Clean screen"><svg width="20" height="20"><path class="w1" d="M.5 3.500h19v13H.5z M12 9l5-4M13 5h4v4M8 11l-5 4M3 11v4h4"/></svg></button></div>
            <div><button class="burger" aria-label="Customization"><span></span><span></span><span></span></button></div>
        </div>
    </footer>

    <footer class="taskbar">
        <button aria-label="Start"><svg width="20" height="20"><path fill="#fff" d="M0 3l9-1v8H0z M10 2l10-2v10H10z M0 11h9v8l-9-1z M10 11h10v9l-10-1z"/></svg></button>
        <button aria-label="Search"><svg width="30" height="28"><circle cx="18" cy="11" r="9.500" stroke="#fff" stroke-width="2"/><path stroke="#fff" stroke-width="3" d="M11 18l-8 8"/></svg></button>
        <button aria-label="Task view"><svg width="20" height="20"><path stroke="#fff" d="M.5 5.500h11v9H.5z M.5 0v2.500h11V0M.5 20v-2.500h11V20M16.500 0v4M16.500 10v10"/><path fill="#fff" d="M15 6h4v3h-4z"/></svg></button>
        <button class="app first" aria-label="Chrome"><svg width="32" height="32"><circle cx="15" cy="15" r="15" fill="#f9bf12"/><path fill="#e23b2e" d="M2 8A15 15 0 0 1 28 8H15l-7 10z"/><path fill="#2a9a48" d="M2 8l7 11 9 3-4 8A15 15 0 0 1 2 8z"/><circle cx="15" cy="15" r="7" fill="#fff"/><circle cx="15" cy="15" r="5.500" fill="#2f78e8"/><circle cx="22" cy="22" r="10" fill="#a9bfd3"/><path fill="#43586a" d="M18 31c0-9 1-14 5-15 4 1 4 8 3 15z"/></svg></button>
        <button class="app" aria-label="Explorer"><svg width="28" height="26"><path fill="#e0a112" d="M0 1h12l2 4H0z"/><path fill="#ffd564" d="M0 4h28v20H0z"/><path fill="#3b93d8" d="M5 26V16q0-3 3-3h12q3 0 3 3v10h-5v-5h-8v5z"/></svg></button>
        <button class="app active" aria-label="AutoCAD"><svg width="28" height="30"><path fill="#e51050" d="M0 2l4-2h22v22H0z"/><path fill="#7a0a2c" d="M2 22h25v8H2z"/><path fill="#a60d3b" d="M24 2l3-2v22h-3z"/><text class="logo-a" x="14" y="18">A</text><text class="logo-cad" x="15" y="28">CAD</text></svg></button>
        <button class="app" aria-label="Capture"><svg width="24" height="30"><path fill="#f0a91c" d="M2 26h8v4H1z M14 26h8l1 4h-9z"/><circle cx="7" cy="6" r="6" fill="#fff"/><circle cx="17" cy="6" r="6" fill="#fff"/><circle cx="9" cy="4" r="2" fill="#222"/><circle cx="15" cy="4" r="2" fill="#222"/><circle cx="12" cy="17" r="10" fill="#0f7fe8"/><circle cx="2" cy="17" r="2.500" fill="#e8dcc0"/><circle cx="22" cy="17" r="2.500" fill="#e8dcc0"/><path stroke="#fff" stroke-width="2" d="M9 10v11h10M5 13h11v11"/></svg></button>
        <div class="tray">
            <button class="tray-help" aria-label="Get help"><svg width="30" height="28"><circle cx="14" cy="14" r="13" fill="#0d93da" stroke="#fff" stroke-width="2"/><text class="q" x="14" y="21">?</text><circle cx="24" cy="20" r="6" fill="#f6b21b"/><path stroke="#fff" stroke-width="2" d="M24 19v5M24 15v2"/></svg></button>
            <button aria-label="News"><svg width="30" height="20"><path stroke="#fff" stroke-width="2" d="M1 1h25v16q0 2 2 2H3q-2 0-2-2z M26 4h3v13q0 2-2 2"/><path stroke="#fff" stroke-width="2" d="M5 8h7v7H5z M5 5h17M15 8h7M15 11h7M15 15h7"/></svg></button>
            <button class="chev" aria-label="Hidden icons"><svg width="16" height="10"><path stroke="#fff" d="M1 9l7-8 7 8"/></svg></button>
            <button aria-label="Battery"><svg width="20" height="14"><path fill="#fff" d="M6 5h12v7H6z"/><path stroke="#fff" d="M7 2.500h11.500v11H4.500V8M1 1v3h4V1M3 4v3h2M19.500 6v4"/></svg></button>
            <button aria-label="Network"><svg width="16" height="16"><path stroke="#bbb" d="M1 15A14 14 0 0 1 15 1M5 15A10 10 0 0 1 15 5M9 15a6 6 0 0 1 6-6"/><circle cx="14" cy="14" r="1.500" fill="#fff"/></svg></button>
            <button aria-label="Volume"><svg width="20" height="16"><path stroke="#fff" d="M.5 5.500h3l4-4v13l-4-4h-3z M11 5c2 2 2 4 0 6"/><path stroke="#888" d="M14 3c3 3 3 7 0 10M17 1c4 4 4 10 0 14"/></svg></button>
            <button class="ime">A</button>
            <button class="han">한</button>
            <button class="clock"><time>오후 9:43</time><time>2023-10-25</time></button>
            <button class="notify" aria-label="Notifications"><svg width="20" height="20"><path fill="#fff" d="M0 0h19v15H9v5l-5-5H0z"/><path stroke="#444" d="M4 4.500h12M4 8.500h12M4 12.500h9"/></svg><span class="badge">1</span></button>
        </div>
    </footer>
</body>
</html>
```
FILE: styles.css
```
* {
    box-sizing: border-box;
}
html, body {
    height: 100%;
}
body {
    margin: 0;
    display: flex;
    flex-direction: column;
    background-color: #222933;
    color: #eef0f2;
    font-family: "Open Sans", "Noto Sans CJK KR", sans-serif;
    font-size: 14px;
    line-height: 20px;
    overflow: hidden;
}
button, input, select {
    font: inherit;
    color: inherit;
    background: none;
    border: 0;
    padding: 0;
    margin: 0;
}
button {
    display: flex;
    align-items: center;
    white-space: nowrap;
    cursor: pointer;
}
svg {
    display: block;
    flex: none;
    fill: none;
}
button svg {
    overflow: visible;
}
.defs {
    position: absolute;
    width: 0;
    height: 0;
}

/* icon colours */
.fw { fill: #d9d9d9; }
.fwh { fill: #f4f4f4; }
.fb { fill: #8accff; }
.fy { fill: #ffd276; }
.fr { fill: #ee5a5a; }
.gr { fill: #6b7078; stroke: #b9bcc0; }
.w1 { stroke: #d9d9d9; }
.w2 { stroke: #d9d9d9; stroke-width: 2; }
.w3 { stroke: #d9d9d9; stroke-width: 4; }
.wd { stroke: #fff; }
.b1 { stroke: #6cc0ff; }
.b2 { stroke: #6cc0ff; stroke-width: 2; }
.y { stroke: #ffd276; }
.y2 { stroke: #ffd276; stroke-width: 2; }
.dk { stroke: #555; }

.caret {
    flex: none;
    border: 4px solid transparent;
    border-top-color: #d9d9d9;
    border-bottom: 0;
}
.caret.wide {
    border-width: 5px 5px 0;
}
.caret.dim {
    border-top-color: #6b727c;
}
.caret.gray {
    border-width: 5px 5px 0;
    border-top-color: #777;
}
.caret-right {
    border: 5px solid transparent;
    border-left-color: #eee;
    border-right: 0;
}
.caret-up {
    border: 5px solid transparent;
    border-bottom-color: #666;
    border-top: 0;
}

/* title bar */
.titlebar {
    display: flex;
    align-items: center;
    height: 36px;
    padding: 0 22px 0 19px;
    margin-bottom: 4px;
}
.logo {
    gap: 4px;
}
.logo-a {
    fill: #fff;
    font-size: 17px;
    font-weight: bold;
    text-anchor: middle;
}
.logo-cad {
    fill: #fff;
    font-size: 7px;
    font-weight: bold;
    text-anchor: middle;
}
.quick {
    display: flex;
    gap: 10px;
    margin-left: 14px;
}
.quick2 {
    display: flex;
    align-items: center;
    gap: 9px;
    margin-left: 8px;
}
.share {
    gap: 6px;
    color: #8accff;
}
.app-title {
    display: flex;
    gap: 16px;
    margin: 0 0 0 126px;
    font-size: 14px;
    font-weight: normal;
    white-space: pre;
}
.file-name {
    font-size: 15px;
}
.search {
    display: flex;
    align-items: center;
    margin-left: auto;
}
.search input {
    width: 223px;
    height: 26px;
    margin: 0 6px 0 8px;
    padding: 0 4px;
    background-color: #485062;
    font-style: italic;
}
.search input::placeholder {
    color: #b4b8bf;
    opacity: 1;
}
.user {
    gap: 8px;
    margin-left: 9px;
}
.account {
    display: flex;
    align-items: center;
    gap: 11px;
    margin-left: 48px;
}
.vline {
    width: 1px;
    height: 22px;
    background-color: #4a5362;
}
.help {
    justify-content: center;
    width: 20px;
    height: 20px;
    border-radius: 50%;
    background-color: #d9d9d9;
    color: #444;
    font-size: 16px;
    font-weight: bold;
}
.window-buttons {
    display: flex;
    gap: 45px;
    margin-left: 102px;
}

/* ribbon tabs */
.tabs {
    display: flex;
    gap: 1px;
    padding-left: 4px;
}
.tabs button {
    height: 25px;
    padding: 0 12px;
    color: #b5b9bf;
}
.tabs .on {
    background-color: #3b4453;
    color: #eef0f2;
}
.tabs .collapse {
    gap: 5px;
    padding-left: 24px;
}

/* ribbon */
.ribbon {
    display: flex;
    height: 124px;
    padding-left: 1px;
    background-color: #3b4453;
}
.panel {
    display: flex;
    flex: none;
    flex-direction: column;
    border-right: 1px solid #252c37;
}
.tools {
    display: flex;
    flex: 1;
    padding-top: 5px;
}
.panel-title {
    justify-content: center;
    gap: 7px;
    width: 100%;
    height: 23px;
}
.p-draw { width: 278px; }
.p-modify { width: 316px; }
.p-annotation { width: 184px; }
.p-layers { width: 341px; }
.p-block { width: 100px; }
.p-properties { width: 277px; }
.p-groups { width: 85px; }
.p-utilities { width: 120px; }
.p-clipboard { width: 113px; }
.p-view { flex: 1; border: 0; }

.big {
    flex-direction: column;
    height: 94px;
    padding-top: 2px;
}
.big svg {
    margin-bottom: 2px;
}
.big .caret {
    margin-top: 4px;
}
.w50 { width: 50px; }
.w52 { width: 52px; }
.w56 { width: 56px; }
.w60 { width: 60px; }
.w66 { width: 66px; }
.w68 { width: 68px; }
.w72 { width: 72px; }
.w78 { width: 78px; }
.w80 { width: 80px; }
.w90 { width: 90px; }
.rows {
    display: flex;
    flex-direction: column;
}
.small {
    gap: 7px;
    height: 31px;
}
.rows .small {
    gap: 9px;
}
.p-draw .rows {
    margin-left: 4px;
}
.modify-grid {
    display: grid;
    grid-template-columns: 91px 88px 95px 20px;
    align-content: start;
    padding-left: 7px;
}
.small.sp {
    width: 80px;
}
.small.sp .caret {
    margin-left: auto;
}
.p-annotation .rows {
    margin-left: 7px;
}
.combo {
    display: flex;
    align-items: center;
    gap: 8px;
    height: 28px;
    margin: 1px 0 2px;
    padding: 0 2px 0 8px;
    border: 1px solid #2a313d;
    background-color: #4c586c;
}
.combo.layer-combo {
    gap: 6px;
    padding-left: 6px;
}
.combo.color-combo {
    gap: 5px;
}
.combo select {
    flex: 1;
    min-width: 0;
    appearance: none;
    outline: none;
}
.swatch {
    width: 17px;
    height: 17px;
    background-color: #fff;
}
.wide-swatch {
    width: 20px;
    height: 20px;
}
.layer-col {
    width: 260px;
}
.layer-grid {
    display: grid;
    grid-template-columns: repeat(5, 30px);
    grid-auto-rows: 31px;
    padding-left: 3px;
}
.p-block .rows {
    margin-left: 4px;
}
.p-properties .prop-icons {
    gap: 11px;
    padding: 5px 3px 0 1px;
}
.prop-combos {
    width: 172px;
}
.rule {
    width: 80px;
    height: 1px;
    background-color: #fff;
}
.prop-combos .combo + .combo {
    gap: 3px;
}
.panel-title .launch {
    margin: 0 6px 0 auto;
}
.p-properties .panel-title {
    padding-left: 89px;
}
.p-groups .picked {
    justify-content: center;
    width: 29px;
    height: 28px;
    margin-top: 1px;
    border: 1px solid #6cc0ff;
    background-color: #48597a;
}
.p-groups .rows {
    align-items: center;
}
.p-view .panel-title {
    justify-content: flex-start;
    gap: 8px;
    padding-left: 7px;
}
.p-view .panel-title svg {
    margin-left: 4px;
}

/* drawing tabs and layout tabs */
.doc-tabs, .layouts {
    display: flex;
    align-items: center;
    padding-left: 20px;
}
.doc-tabs {
    height: 33px;
    padding-top: 2px;
}
.burger {
    flex-direction: column;
    justify-content: center;
    gap: 4px;
    width: 20px;
}
.burger span {
    width: 20px;
    height: 2px;
    background-color: #d9d9d9;
}
.slash {
    width: 1px;
    height: 20px;
    background-color: #566070;
    transform: rotate(22deg);
}
.doc-tabs > .slash {
    margin: 0 14px 0 17px;
}
.doc-on {
    gap: 12px;
    align-self: flex-end;
    height: 30px;
    margin-left: 8px;
    padding: 0 15px 0 23px;
    background-color: #3b4453;
    clip-path: polygon(11% 0, 100% 0, 89% 100%, 0 100%);
}
.doc-tabs .plus {
    margin-left: 14px;
}
.layouts {
    height: 36px;
    padding-bottom: 4px;
}
.layouts > .doc-on {
    align-self: flex-start;
    margin: 0 10px 0 12px;
    padding: 0 20px;
}
.layouts > .slash {
    margin: 0 14px 0 16px;
}

/* work area */
.work {
    display: flex;
    flex: 1;
    min-height: 0;
    border-top: 5px solid #3b4453;
    border-bottom: 5px solid #3b4453;
}
.palette {
    display: flex;
    flex-direction: column;
    align-items: center;
    justify-content: center;
    flex: none;
    width: 28px;
    margin: 7px 3px 6px 0;
    padding-bottom: 12px;
    background-color: #3b4453;
    border-left: 1px solid #222933;
}
.grip {
    width: 10px;
    height: 5px;
    margin: 3px 0 auto;
    background-image: radial-gradient(#aab0b8 1px, transparent 1px);
    background-size: 3px 3px;
}
.palette-name {
    margin-bottom: auto;
    writing-mode: vertical-rl;
    transform: rotate(180deg);
}
.canvas {
    position: relative;
    flex: 1;
    background-color: #212830;
}
.drawing {
    width: 100%;
    height: 100%;
}
.grid { stroke: #262e38; }
.grid.major { stroke: #303a49; }
.view-label { fill: #e4e6e8; }
.part {
    stroke: #000;
    stroke-width: 2;
}
.part .heavy { stroke-width: 3; }
.dims { stroke: #8c8c8c; }
.dims text {
    fill: #8c8c8c;
    stroke: none;
    font-size: 28px;
    font-weight: 300;
}
.model { stroke: #e4e6e8; }
.model text {
    fill: #fff;
    stroke: none;
    font-family: "Liberation Sans", sans-serif;
    font-size: 12px;
}
.red { stroke: #e60808; }
.cross { stroke: #fff; }
.green { stroke: #00b000; }
.ucs { stroke: #e4e6e8; }
.ucs text {
    fill: #e4e6e8;
    stroke: none;
    font-size: 21px;
    font-weight: 300;
}
.viewcube circle {
    stroke: #454c54;
    stroke-width: 13;
}
.viewcube text {
    fill: #b0b2b4;
    font-family: "Liberation Sans", sans-serif;
    font-size: 22px;
    font-weight: bold;
    text-anchor: middle;
}
.cube { fill: #aeb0b3; stroke: #8d9290; }
.face { fill: #9fa2ac; }
.viewcube .top {
    fill: #555b66;
    font-family: "Open Sans", sans-serif;
    font-size: 13px;
}

.tooltip {
    position: absolute;
    left: 1374px;
    top: 348px;
    padding: 2px 11px 2px 5px;
    border: 1px solid #000;
    background-color: #979797;
    color: #111;
}
.doc-buttons {
    position: absolute;
    top: 12px;
    right: 12px;
    display: flex;
    gap: 12px;
}
.wcs {
    position: absolute;
    top: 211px;
    right: 61px;
    gap: 6px;
    height: 20px;
    padding: 0 5px;
    border-radius: 5px;
    background-color: #969ba8;
    color: #555a64;
    font-family: "Liberation Sans", sans-serif;
    font-size: 13px;
}
.navbar {
    position: absolute;
    top: 262px;
    right: 3px;
    display: flex;
    flex-direction: column;
    width: 41px;
    height: 259px;
    padding: 2px;
    border-radius: 4px;
    background-color: #5a5e61;
    box-shadow: 0 0 3px #111;
}
.navbar button {
    flex-direction: column;
    justify-content: center;
    gap: 9px;
    height: 38px;
}
.navbar .tall {
    height: 47px;
}
.navbar .wheel {
    margin-top: 8px;
}
.navbar .corner {
    align-items: flex-end;
    height: 9px;
    padding-right: 2px;
}
.navbar .last {
    margin-top: auto;
}
.navbar svg {
    stroke: #464c54;
    stroke-width: 2;
}
.navbar .corner svg {
    stroke-width: 1;
}
.navbar .thick { stroke-width: 4; }
.navbar .solid { fill: #464c54; }
.navbar .caret {
    border-top-color: #40464e;
}
.navbar hr {
    width: 100%;
    margin: 0;
    border: 0;
    border-top: 1px solid #63686b;
}
.activate {
    position: absolute;
    right: 82px;
    bottom: 7px;
    display: flex;
    flex-direction: column;
    color: #7f8488;
    font-size: 17px;
    line-height: 24px;
}
.activate strong {
    font-size: 24px;
    font-weight: normal;
    line-height: 36px;
}

/* command line */
.command {
    position: absolute;
    left: 396px;
    right: 397px;
    bottom: 0;
    font-family: "DejaVu Sans Mono", monospace;
    font-size: 15px;
    line-height: 19px;
}
.history {
    display: flex;
    flex-direction: column;
    align-items: flex-start;
    gap: 6px;
    margin: 0 0 4px 79px;
    padding: 0;
    list-style: none;
}
.history li {
    padding: 0 2px;
    border-radius: 2px;
    background-color: #5c5e5e;
    color: #eee;
}
.history li:first-child {
    background-color: #505252;
    color: #aaa;
}
.history li:nth-child(2) {
    color: #ccc;
}
.command-line {
    display: flex;
    height: 33px;
}
.command-tools {
    display: flex;
    align-items: center;
    gap: 14px;
    width: 72px;
    padding-left: 5px;
    background-color: #303642;
}
.command-tools .dots {
    width: 6px;
    height: 21px;
    margin-right: -6px;
    background-image: radial-gradient(#ccc 1px, transparent 1px);
    background-size: 3px 3px;
}
.command-box {
    display: flex;
    align-items: center;
    flex: 1;
    padding: 2px 5px 0;
    border-radius: 0 3px 3px 0;
    background-color: #fff;
    color: #000;
    white-space: pre;
}
.command-box .caret {
    margin: 0 7px 0 2px;
}
.command-box b {
    margin-right: 6px;
}
.undo {
    height: 22px;
    border-radius: 4px;
    padding: 0 1px;
    background-color: #ccc;
    color: #0a0a60;
}
.undo span {
    color: #0000e0;
}
.command-box input {
    flex: 1;
    min-width: 0;
    outline: none;
}

/* status toggles */
.status {
    display: flex;
    gap: 3px;
    margin: 0 2px 0 auto;
}
.status div {
    display: flex;
    background-color: #3b4453;
}
.status button {
    justify-content: center;
    min-width: 30px;
    height: 30px;
}
.status .st-model {
    padding: 0 5px;
}
.status .lit {
    background-color: #5f8fc4;
    border: 1px solid #86b6e8;
}
.status .with-caret {
    gap: 9px;
    min-width: 49px;
}
.status .only-caret {
    min-width: 20px;
}
.status .st-graphics {
    min-width: 33px;
}
.status .scale {
    gap: 5px;
    padding: 0 5px;
    font-size: 13px;
}

/* windows taskbar */
.taskbar {
    display: flex;
    flex: none;
    height: 50px;
    background-color: #474747;
}
.taskbar > button {
    justify-content: center;
    width: 60px;
}
.taskbar > .app {
    width: 62px;
    background: linear-gradient(#76d6dc, #76d6dc) center bottom / 51px 3px no-repeat;
}
.taskbar > .first {
    margin-left: 4px;
}
.taskbar > .active {
    background-color: #6f6f6f;
    background-size: 100% 3px;
}
.tray {
    display: flex;
    align-items: center;
    gap: 12px;
    margin-left: auto;
    padding-right: 4px;
}
.tray-help {
    margin-right: 197px;
}
.q {
    fill: #fff;
    font-size: 20px;
    font-weight: bold;
    text-anchor: middle;
}
.chev {
    margin-left: 20px;
}
.ime {
    margin-right: 6px;
    font-size: 24px;
}
.han {
    justify-content: center;
    width: 20px;
    height: 20px;
    background-color: #fff;
    color: #111;
}
.clock {
    flex-direction: column;
    gap: 3px;
    width: 92px;
    color: #fff;
}
.notify {
    position: relative;
    width: 50px;
    height: 50px;
    padding-left: 3px;
    border-right: 1px solid #6a6a6a;
}
.badge {
    position: absolute;
    left: 12px;
    top: 24px;
    width: 20px;
    height: 20px;
    border: 1px solid #888;
    border-radius: 50%;
    background-color: #2b2b2b;
    color: #fff;
    font-size: 13px;
    line-height: 18px;
}
```
